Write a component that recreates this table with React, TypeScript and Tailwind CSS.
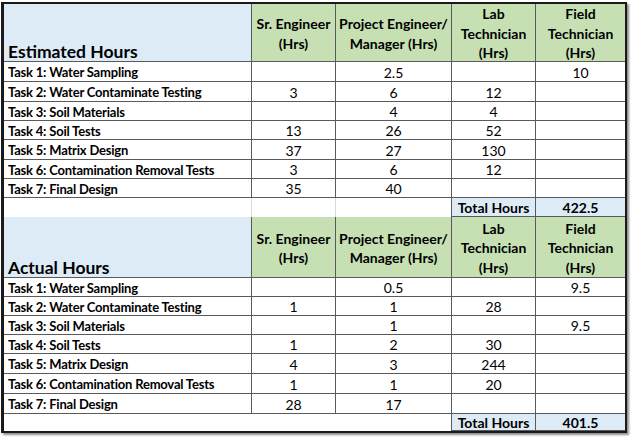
import React from "react";

const LINE = "border-[#5a5a5a]";
const BLUE = "bg-[#ddebf7]";
const GREEN = "bg-[#c6e0b4]";

type Row = [string, string, string, string, string];

const est: Row[] = [
  ["Task 1: Water Sampling", "", "2.5", "", "10"],
  ["Task 2: Water Contaminate Testing", "3", "6", "12", ""],
  ["Task 3: Soil Materials", "", "4", "4", ""],
  ["Task 4: Soil Tests", "13", "26", "52", ""],
  ["Task 5: Matrix Design", "37", "27", "130", ""],
  ["Task 6: Contamination Removal Tests", "3", "6", "12", ""],
  ["Task 7: Final Design", "35", "40", "", ""],
];

const act: Row[] = [
  ["Task 1: Water Sampling", "", "0.5", "", "9.5"],
  ["Task 2: Water Contaminate Testing", "1", "1", "28", ""],
  ["Task 3: Soil Materials", "", "1", "", "9.5"],
  ["Task 4: Soil Tests", "1", "2", "30", ""],
  ["Task 5: Matrix Design", "4", "3", "244", ""],
  ["Task 6: Contamination Removal Tests", "1", "1", "20", ""],
  ["Task 7: Final Design", "28", "17", "", ""],
];

const HEAD = `${GREEN} border-b ${LINE} flex flex-col items-center justify-center pt-[2px] text-[14px] font-bold leading-[19.5px] text-center`;

function Header({ title }: { title: string }) {
  return (
    <>
      <div className={`${BLUE} border-r border-b ${LINE} flex items-end pl-[4px]`}>
        <span className="text-[17.5px] font-bold leading-[18px]">{title}</span>
      </div>
      <div className={`${HEAD} border-r`}>
        <span>Sr. Engineer</span>
        <span>(Hrs)</span>
      </div>
      <div className={`${HEAD} border-r`}>
        <span>Project Engineer/</span>
        <span>Manager (Hrs)</span>
      </div>
      <div className={`${HEAD} border-r`}>
        <span>Lab</span>
        <span>Technician</span>
        <span>(Hrs)</span>
      </div>
      <div className={HEAD}>
        <span>Field</span>
        <span>Technician</span>
        <span>(Hrs)</span>
      </div>
    </>
  );
}

function DataRows({ rows }: { rows: Row[] }) {
  return (
    <>
      {rows.map((r, i) => (
        <React.Fragment key={i}>
          <div className={`border-r border-b ${LINE} flex items-center pl-[4px] pt-[2px] text-[13px] font-bold leading-none whitespace-nowrap tracking-[-0.2px]`}>
            {r[0]}
          </div>
          {r.slice(1).map((v, j) => (
            <div
              key={j}
              className={`${j < 3 ? "border-r" : ""} border-b ${LINE} flex items-center justify-center pt-[2px] text-[14px] leading-none`}
            >
              {v}
            </div>
          ))}
        </React.Fragment>
      ))}
    </>
  );
}

function TotalRow({ value, faint }: { value: string; faint: boolean }) {
  const g = faint ? "border-r border-[#d9d9d9]" : "";
  return (
    <>
      <div className={g}></div>
      <div className={g}></div>
      <div className={`border-r ${LINE}`}></div>
      <div className={`${BLUE} border-r border-b ${LINE} flex items-center justify-center pt-[2px] text-[14px] font-bold leading-none`}>
        Total Hours
      </div>
      <div className={`${BLUE} border-b ${LINE} flex items-center justify-center pt-[2px] text-[14px] font-bold leading-none`}>
        {value}
      </div>
    </>
  );
}

export default function App() {
  return (
    <div className="w-[632px] h-[437px] bg-white pt-[2px] pl-[1px]" style={{ fontFamily: "Lato, 'Liberation Sans', sans-serif" }}>
      <div className="w-[626px] border-l-[3px] border-t-2 border-r-2 border-b-2 border-[#1a1a1a] shadow-[2px_2px_2px_rgba(0,0,0,0.45)] bg-white text-black">
        <div className="grid grid-cols-[248px_84px_116px_84px_89px] grid-rows-[58px_20px_20px_19px_19px_20px_19px_19px_19px_61px_19px_19px_19px_19px_20px_20px_20px_17px]">
          <Header title="Estimated Hours" />
          <DataRows rows={est} />
          <TotalRow value="422.5" faint={true} />
          <Header title="Actual Hours" />
          <DataRows rows={act} />
          <TotalRow value="401.5" faint={false} />
        </div>
      </div>
    </div>
  );
}
